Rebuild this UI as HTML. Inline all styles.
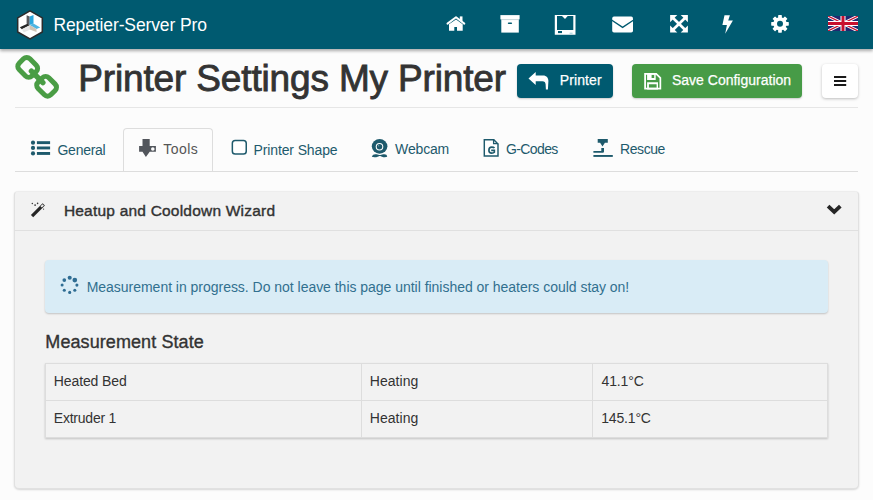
<!DOCTYPE html>
<html><head><meta charset="utf-8">
<style>
*{box-sizing:border-box;margin:0;padding:0}
html,body{width:873px;height:500px;overflow:hidden;background:#fcfcfc;font-family:"Liberation Sans",sans-serif;color:#333}
.abs{position:absolute}
#hdr{position:absolute;left:0;top:0;width:873px;height:49px;background:#005a70;box-shadow:0 2px 3px rgba(0,0,0,.32);z-index:2}
.t{position:absolute;white-space:nowrap;line-height:1}
#brand{left:53.5px;top:17px;font-size:17.5px;letter-spacing:-0.125px;color:#fff}
#title{left:78.3px;top:60px;font-size:37px;letter-spacing:-0.154px;color:#333;-webkit-text-stroke:0.85px #333}
#hr1{left:15px;top:107px;width:843px;height:1px;background:#e6e6e6}
.btn{position:absolute;border-radius:4px;box-shadow:0 1px 2px rgba(0,0,0,.2)}
#bprinter{left:517px;top:64px;width:96px;height:34px;background:#005a70}
#bsave{left:632px;top:64px;width:170px;height:34px;background:#479b47}
#bmenu{left:822px;top:64px;width:36px;height:34px;background:#fff;box-shadow:0 1px 3px rgba(0,0,0,.25)}
.btxt{font-size:14px;color:#fff;-webkit-text-stroke:0.25px #fff}
#tabline{left:15px;top:171px;width:843px;height:1px;background:#ddd}
#tabtools{left:123px;top:128px;width:90px;height:43px;border:1px solid #ddd;border-bottom:none;border-radius:4px 4px 0 0;background:#fcfcfc}
.tab{font-size:14px;color:#1e5a6c}
#panel{left:14px;top:191px;width:845px;height:298px;background:#f2f2f2;border:1px solid #e1e1e1;border-top-color:#ededed;border-radius:4px 4px 5px 5px;box-shadow:0 1px 2px rgba(0,0,0,.15)}
#phdrline{left:14px;top:230px;width:845px;height:1px;background:#e0e0e0}
#ptitle{left:63.9px;top:203.2px;font-size:15.5px;letter-spacing:0.208px;-webkit-text-stroke:0.4px #333;color:#333}
#alert{left:45px;top:260px;width:783px;height:53px;background:#d9ecf6;border-radius:4px;box-shadow:0 1px 2px rgba(0,0,0,.2)}
#alerttxt{left:86.7px;top:279.6px;font-size:14px;letter-spacing:-0.025px;color:#31708f}
#mstate{left:45.3px;top:332.7px;font-size:18px;-webkit-text-stroke:0.35px #333;letter-spacing:0.087px;color:#333}
#table{left:45px;top:363px;width:783px;height:75px;border:1px solid #ddd;box-shadow:0 1px 2px rgba(0,0,0,.2);background:#f2f2f2}
.cell{font-size:14px;color:#333}
</style></head>
<body>
<div id="hdr">
  <svg class="abs" style="left:14px;top:8px" width="32" height="34" viewBox="14 8 32 34">
    <polygon points="30,10.9 42.3,17.9 42.3,32 30,39 17.7,32 17.7,17.9" fill="#fff" stroke="#2b2b2b" stroke-width="1.5"/>
    <polygon points="26.6,15.2 29.7,16.5 29.7,25 26.6,23.8" fill="#5a5a5e"/>
    <polygon points="29.7,16.5 33.5,15 33.5,23.6 29.7,25" fill="#2aa7de"/>
    <polygon points="19.8,27.3 27.4,23.7 29.8,25.3 21.8,29.3" fill="#262626"/>
    <polygon points="21.8,29.3 29.8,25.3 29.8,29.8 23.8,32.6" fill="#e6e6e6"/>
    <polygon points="29.7,25 33.5,23.6 40.2,27.4 36.5,29" fill="#4fb6e3"/>
    <polygon points="29.7,25 36.5,29 36.5,32 29.7,29.6" fill="#cfc5b6"/>
  </svg>
  <div id="brand" class="t">Repetier-Server Pro</div>
  <!-- home -->
  <svg class="abs" style="left:444px;top:13px" width="24" height="21" viewBox="444 13 24 21">
    <path d="M447.5,23.6 L456,17.3 L464.3,23.6" fill="none" stroke="#fff" stroke-width="2" stroke-linecap="round" stroke-linejoin="round"/>
    <rect x="459.8" y="16.4" width="2.7" height="4.6" fill="#fff"/>
    <path d="M449,24.2 L456,19.6 L462.7,24.2 V30.7 H457 V26.9 H454.3 V30.7 H449 Z" fill="#fff"/>
  </svg>
  <!-- archive -->
  <svg class="abs" style="left:497px;top:12px" width="26" height="24" viewBox="497 12 26 24">
    <rect x="500.4" y="15.1" width="19.2" height="4.3" fill="#fff"/>
    <rect x="501.3" y="19.3" width="17.5" height="13.3" fill="#fff"/>
    <rect x="501.3" y="19.3" width="17.5" height="0.8" fill="#c9d7db"/>
    <rect x="507.8" y="22.5" width="4.3" height="1.6" rx="0.8" fill="#005a70"/>
  </svg>
  <!-- printer/tablet -->
  <svg class="abs" style="left:551px;top:11px" width="28" height="27" viewBox="551 11 28 27">
    <path d="M554.8,15 H575.5 V34.7 H554.8 Z M557,16.1 V29.9 H573.3 V16.1 Z" fill="#fff" fill-rule="evenodd"/>
    <polygon points="562,16 567.7,16 565,18.9" fill="#fff"/>
    <rect x="558" y="31" width="4" height="2.1" fill="#005a70"/>
    <rect x="569.6" y="32.7" width="3" height="1" fill="#9fd0dc"/>
  </svg>
  <!-- envelope -->
  <svg class="abs" style="left:608px;top:12px" width="30" height="24" viewBox="608 12 30 24">
    <rect x="612.2" y="16.6" width="20.8" height="16" rx="1.8" fill="#fff"/>
    <path d="M611.5,20 L622.6,27.3 L633.7,20" fill="none" stroke="#005a70" stroke-width="1.4"/>
  </svg>
  <!-- expand -->
  <svg class="abs" style="left:667px;top:12px" width="24" height="24" viewBox="667 12 24 24">
    <g fill="#fff">
      <polygon points="670.1,15.1 677.3,15.1 670.1,22.3"/>
      <polygon points="687.9,15.1 680.7,15.1 687.9,22.3"/>
      <polygon points="670.1,32.6 677.3,32.6 670.1,25.4"/>
      <polygon points="687.9,32.6 680.7,32.6 687.9,25.4"/>
    </g>
    <path d="M672,17 L686,30.7 M686,17 L672,30.7" stroke="#fff" stroke-width="2.7"/>
  </svg>
  <!-- bolt -->
  <svg class="abs" style="left:716px;top:12px" width="24" height="24" viewBox="716 12 24 24">
    <polygon points="724.5,15.3 729.9,15.3 728.2,20.4 732.9,20.4 725.2,33.8 726.9,25.1 722.4,25.1" fill="#fff"/>
  </svg>
  <!-- gear -->
  <svg class="abs" style="left:768px;top:12px" width="24" height="24" viewBox="768 12 24 24">
    <g fill="#fff" transform="translate(780,23.85)">
      <circle r="6.7"/>
      <rect x="-1.85" y="-8.8" width="3.7" height="17.6" rx="0.6"/>
      <rect x="-1.85" y="-8.8" width="3.7" height="17.6" rx="0.6" transform="rotate(45)"/>
      <rect x="-1.85" y="-8.8" width="3.7" height="17.6" rx="0.6" transform="rotate(90)"/>
      <rect x="-1.85" y="-8.8" width="3.7" height="17.6" rx="0.6" transform="rotate(135)"/>
    </g>
    <circle cx="780" cy="23.85" r="3" fill="#005a70"/>
  </svg>
  <!-- flag -->
  <svg class="abs" style="left:828px;top:16px" width="30" height="15" viewBox="0 0 60 30">
    <rect width="60" height="30" fill="#232870"/>
    <path d="M0,0 L60,30 M60,0 L0,30" stroke="#fff" stroke-width="6"/>
    <path d="M0,0 L60,30 M60,0 L0,30" stroke="#c8102e" stroke-width="2.4"/>
    <path d="M30,0 V30 M0,15 H60" stroke="#fff" stroke-width="10"/>
    <path d="M30,0 V30 M0,15 H60" stroke="#c8102e" stroke-width="6"/>
  </svg>
</div>

<!-- link icon -->
<svg class="abs" style="left:10px;top:50px" width="55" height="55" viewBox="10 50 55 55">
  <g fill="none" stroke="#4a9d45" stroke-width="5">
    <rect x="-7.6" y="-9" width="15.2" height="18" rx="4.5" transform="translate(27.7,67.4) rotate(-45)"/>
    <rect x="-7.6" y="-9" width="15.2" height="18" rx="4.5" transform="translate(46.6,86.3) rotate(-45)"/>
  </g>
  <path d="M31.4,71.1 L42.9,82.6" stroke="#4a9d45" stroke-width="5.4" stroke-linecap="round"/>
</svg>
<div id="title" class="t">Printer Settings My Printer</div>
<div id="hr1" class="abs"></div>

<div id="bprinter" class="btn">
  <svg class="abs" style="left:9px;top:5px" width="26" height="23" viewBox="526 69 26 23">
    <path d="M528.5,78.4 L535.7,72 V75.4 H543 C546.6,75.4 548.4,77.8 548.4,81 L547.9,89.6 L545.9,89.6 L545.6,84.2 C545.4,82.2 544.6,81.2 542.4,81.2 H535.7 V84.9 Z" fill="#fff"/>
  </svg>
  <div class="t btxt" style="left:42.7px;top:9.3px;letter-spacing:0.117px">Printer</div>
</div>
<div id="bsave" class="btn">
  <svg class="abs" style="left:9px;top:6px" width="24" height="23" viewBox="641 70 24 23">
    <path d="M644.2,73 H656.6 L661.2,77.6 V89.5 H644.2 Z M646,74.8 V87.7 H659.5 V78.3 L655.9,74.8 Z" fill="#fff" fill-rule="evenodd"/>
    <path d="M647.1,73 H655.7 V79.9 H647.1 Z M651.6,74.8 V78 H654.2 V74.8 Z" fill="#fff" fill-rule="evenodd"/>
    <path d="M647.1,82.2 H658 V89.5 H647.1 Z M648.9,84.2 V87.7 H656.6 V84.2 Z" fill="#fff" fill-rule="evenodd"/>
  </svg>
  <div class="t btxt" style="left:40px;top:8.8px">Save Configuration</div>
</div>
<div id="bmenu" class="btn">
  <svg class="abs" style="left:12px;top:12px" width="13" height="11" viewBox="0 0 13 11">
    <rect x="0" y="0" width="12.2" height="2" fill="#1a1a1a"/>
    <rect x="0" y="4" width="12.2" height="2" fill="#1a1a1a"/>
    <rect x="0" y="8" width="12.2" height="2" fill="#1a1a1a"/>
  </svg>
</div>

<div id="tabline" class="abs"></div>
<div id="tabtools" class="abs"></div>
<!-- General -->
<svg class="abs" style="left:28px;top:138px" width="24" height="20" viewBox="28 138 24 20">
  <g fill="#1e5a6c"><circle cx="33" cy="142.65" r="2.1"/><circle cx="33" cy="147.95" r="2.1"/><circle cx="33" cy="153.45" r="2.1"/>
  <rect x="36.9" y="141.2" width="13.2" height="2.9"/><rect x="36.9" y="146.5" width="13.2" height="2.9"/><rect x="36.9" y="152" width="13.2" height="2.9"/></g>
</svg>
<div id="tgen" class="t tab" style="left:57.5px;top:142.8px;letter-spacing:-0.267px">General</div>
<!-- Tools -->
<svg class="abs" style="left:136px;top:136px" width="24" height="24" viewBox="136 136 24 24">
  <path d="M142.5,139.1 H149.7 V146.1 H155.9 V151.8 H149.7 L145.9,157 L142.5,151.8 H139.1 V146.1 H142.5 Z" fill="#52565c"/>
  <circle cx="152.8" cy="149" r="1.8" fill="#fcfcfc"/>
</svg>
<div id="ttools" class="t tab" style="left:163.2px;top:141.9px;letter-spacing:0.5px;color:#555">Tools</div>
<!-- Printer Shape -->
<svg class="abs" style="left:228px;top:136px" width="24" height="24" viewBox="228 136 24 24">
  <rect x="232.35" y="140.55" width="13.9" height="13.5" rx="2.8" fill="#fff" stroke="#1e5a6c" stroke-width="1.5"/>
</svg>
<div id="tshape" class="t tab" style="left:253.6px;top:143px;letter-spacing:-0.133px">Printer Shape</div>
<!-- Webcam -->
<svg class="abs" style="left:368px;top:136px" width="24" height="24" viewBox="368 136 24 24">
  <ellipse cx="379.6" cy="146.35" rx="7.8" ry="7.35" fill="#1e5a6c"/>
  <circle cx="379.5" cy="146.7" r="3.8" fill="#fff"/>
  <circle cx="379.5" cy="146.7" r="2.75" fill="#1e5a6c"/>
  <circle cx="378.6" cy="145.8" r="0.7" fill="#6f9aa8"/>
  <path d="M371.8,156.8 C372.5,154.5 374.5,153.9 376.5,154.3 C378,154.7 379,155 379.85,155 C380.7,155 381.7,154.7 383.2,154.3 C385.2,153.9 387.2,154.5 387.2,156.8 C385.5,157.5 383.5,157.3 382,156.7 C381,156.2 380.5,155.9 379.85,155.9 C379.2,155.9 378.7,156.2 377.7,156.7 C376.2,157.3 373.5,157.5 371.8,156.8 Z" fill="#1e5a6c"/>
</svg>
<div id="tweb" class="t tab" style="left:395.1px;top:141.9px;letter-spacing:-0.16px">Webcam</div>
<!-- G-Codes -->
<svg class="abs" style="left:480px;top:136px" width="24" height="24" viewBox="480 136 24 24">
  <path d="M484.3,139.8 H493.8 L498,144 V155.9 H484.3 Z" fill="#fff" stroke="#1e5a6c" stroke-width="1.45" stroke-linejoin="miter"/>
  <path d="M493.6,139.6 V143.6 H498.2" fill="none" stroke="#1e5a6c" stroke-width="1.3"/>
  <path d="M494.5,148 C494,147.4 493,147.1 491.7,147.1 C489.8,147.1 488.9,148.4 488.9,150.2 C488.9,152 489.8,153.1 491.7,153.1 C493,153.1 494,152.7 494.35,152.3 V150.3 H491.2" fill="none" stroke="#1e5a6c" stroke-width="1.65"/>
</svg>
<div id="tgc" class="t tab" style="left:506px;top:141.9px;letter-spacing:-0.617px">G-Codes</div>
<!-- Rescue -->
<svg class="abs" style="left:591px;top:136px" width="24" height="24" viewBox="591 136 24 24">
  <g fill="#1e5a6c">
    <path d="M597.7,139.1 H607.8 V142.7 H604.9 L602.5,146.6 L600.1,142.7 H597.7 Z"/>
    <path d="M601.3,148 H604 V151.6 Q604,152.8 602.8,152.8 H593.4 V151.1 H601.3 Z"/>
    <rect x="593.4" y="155" width="19.4" height="1.9"/>
  </g>
</svg>
<div id="tres" class="t tab" style="left:620.1px;top:141.9px;letter-spacing:-0.44px">Rescue</div>

<div id="panel" class="abs"></div>
<div id="phdrline" class="abs"></div>
<svg class="abs" style="left:27px;top:198px" width="22" height="22" viewBox="27 198 22 22">
  <path d="M30.9,214.9 L42.6,203.3 L44.9,205.6 L33.2,217.2 Z" fill="#262626"/>
  <path d="M40.5,206.3 L42.6,204.2 L43.9,205.5 L41.8,207.6 Z" fill="#f2f2f2"/>
  <g fill="#3a3a3a"><circle cx="32.3" cy="203.4" r="0.75"/><circle cx="37.6" cy="203.4" r="0.8"/><circle cx="35.1" cy="205.1" r="0.9"/><circle cx="43.6" cy="209.1" r="0.6"/></g>
</svg>
<div id="ptitle" class="t">Heatup and Cooldown Wizard</div>
<svg class="abs" style="left:826px;top:204px" width="17" height="12" viewBox="0 0 17 12">
  <path d="M2.1,2.2 L8.2,8 L14.3,2.2" fill="none" stroke="#262626" stroke-width="3.8"/>
</svg>

<div id="alert" class="abs"></div>
<svg class="abs" style="left:57px;top:273px" width="24" height="24" viewBox="57 273 24 24">
  <g fill="#2f6d93">
    <circle cx="69.7" cy="277.8" r="2.05"/>
    <circle cx="74.8" cy="280.1" r="2.35"/>
    <circle cx="76.9" cy="285.1" r="1.55"/>
    <circle cx="74.8" cy="290.3" r="1.55"/>
    <circle cx="69.7" cy="292.4" r="1.55"/>
    <circle cx="64.3" cy="290.3" r="1.55"/>
    <circle cx="62.1" cy="285.1" r="1.5"/>
    <circle cx="64.3" cy="280.1" r="1.85"/>
  </g>
</svg>
<div id="alerttxt" class="t">Measurement in progress. Do not leave this page until finished or heaters could stay on!</div>

<div id="mstate" class="t">Measurement State</div>
<div id="table" class="abs"></div>
<div class="abs" style="left:45px;top:400px;width:783px;height:1px;background:#ddd"></div>
<div class="abs" style="left:361px;top:363px;width:1px;height:75px;background:#ddd"></div>
<div class="abs" style="left:592px;top:363px;width:1px;height:75px;background:#ddd"></div>
<div id="c1" class="t cell" style="left:53.8px;top:373.8px;letter-spacing:-0.111px">Heated Bed</div>
<div id="c2" class="t cell" style="left:369.8px;top:373.8px;letter-spacing:0.033px">Heating</div>
<div id="c3" class="t cell" style="left:601.6px;top:373.8px;letter-spacing:-0.16px">41.1°C</div>
<div id="c4" class="t cell" style="left:53.8px;top:410.7px;letter-spacing:-0.222px">Extruder 1</div>
<div id="c5" class="t cell" style="left:369.8px;top:410.7px;letter-spacing:0.033px">Heating</div>
<div id="c6" class="t cell" style="left:601.2px;top:410.7px;letter-spacing:-0.167px">145.1°C</div>
</body></html>
